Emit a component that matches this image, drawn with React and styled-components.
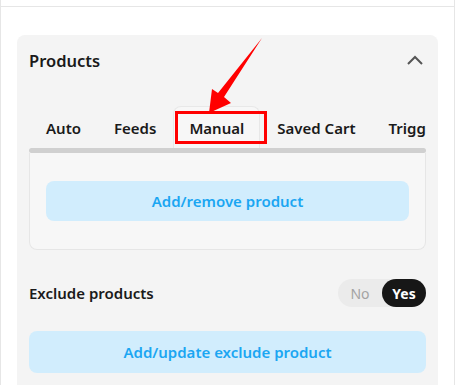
import React from 'react';
import styled, { createGlobalStyle } from 'styled-components';

const GlobalStyle = createGlobalStyle`
  html, body {
    margin: 0;
    padding: 0;
    background: #ffffff;
    font-family: "Noto Sans", "Open Sans", Arial, sans-serif;
    color: #1a1a1a;
    overflow: hidden;
  }
  * { box-sizing: border-box; }
`;

const Sidebar = styled.div`
  position: relative;
  width: 455px;
  height: 385px;
  border-left: 1px solid #e6e6e6;
  border-right: 1px solid #e6e6e6;
  background: #ffffff;
`;

const TopStrip = styled.div`
  height: 7px;
  border-bottom: 1px solid #e6e6e6;
`;

const Content = styled.div`
  padding: 28px 16px 0 16px;
`;

const Panel = styled.section`
  background: #f4f4f4;
  border-radius: 8px;
  padding: 0 12px 20px 12px;
  height: 360px;
`;

const PanelHeader = styled.div`
  display: flex;
  align-items: center;
  justify-content: space-between;
  height: 50px;
`;

const PanelTitle = styled.h2`
  margin: 0;
  font-size: 16.5px;
  font-weight: 600;
  color: #1a1a1a;
`;

const Chevron = styled.svg`
  width: 18px;
  height: 18px;
  margin-right: 2px;
`;

const Tabs = styled.div`
  margin-top: 21px;
  width: 397px;
  overflow: hidden;
`;

const TabRow = styled.div`
  display: flex;
  gap: 1px;
  padding-left: 1px;
  height: 42px;
  white-space: nowrap;
`;

const Tab = styled.div`
  display: flex;
  align-items: center;
  padding: 0 15px;
  font-size: 15px;
  font-weight: 600;
  color: #1a1a1a;
  border: 1px solid ${p => (p.$active ? '#e8e8e8' : 'transparent')};
  border-bottom: none;
  border-radius: 8px 8px 0 0;
  background: ${p => (p.$active ? '#f7f7f7' : 'transparent')};
`;

const ScrollBar = styled.div`
  height: 5px;
  background: #d0d0d0;
  border-radius: 3px;
`;

const TabBody = styled.div`
  background: #f7f7f7;
  border: 1px solid #e6e6e6;
  border-top: none;
  border-radius: 0 0 8px 8px;
  padding: 28px 16px;
`;

const ActionButton = styled.button`
  display: block;
  width: 100%;
  height: ${p => p.$h || 40}px;
  border: none;
  border-radius: 8px;
  background: #d1edfd;
  color: #1ba6f2;
  font-family: inherit;
  font-size: 15px;
  font-weight: 600;
  cursor: pointer;
`;

const OptionRow = styled.div`
  display: flex;
  align-items: center;
  justify-content: space-between;
  margin-top: 29px;
  margin-bottom: 24px;
`;

const OptionLabel = styled.span`
  font-size: 15px;
  font-weight: 600;
  color: #1a1a1a;
`;

const Toggle = styled.div`
  display: flex;
  width: 88px;
  height: 28px;
  border-radius: 14px;
  background: #ebebeb;
`;

const ToggleOption = styled.span`
  display: flex;
  align-items: center;
  justify-content: center;
  flex: 1;
  border-radius: 14px;
  font-size: 14px;
  font-weight: ${p => (p.$on ? 700 : 400)};
  color: ${p => (p.$on ? '#ffffff' : '#a3a3a3')};
  background: ${p => (p.$on ? '#171717' : 'transparent')};
`;

const Highlight = styled.div`
  position: absolute;
  left: 175px;
  top: 111px;
  width: 92px;
  height: 33px;
  border: 3px solid #ff0000;
`;

const Arrow = styled.svg`
  position: absolute;
  left: 0;
  top: 0;
  width: 463px;
  height: 385px;
  pointer-events: none;
`;

const tabs = ['Auto', 'Feeds', 'Manual', 'Saved Cart', 'Triggers'];

export default function App() {
  return (
    <>
      <GlobalStyle />
      <Sidebar>
        <TopStrip />
        <Content>
          <Panel>
            <PanelHeader>
              <PanelTitle>Products</PanelTitle>
              <Chevron viewBox="0 0 18 18">
                <path d="M2 13 L9 6 L16 13" fill="none" stroke="#555" strokeWidth="2" />
              </Chevron>
            </PanelHeader>
            <Tabs>
              <TabRow>
                {tabs.map(t => (
                  <Tab key={t} $active={t === 'Manual'}>{t}</Tab>
                ))}
              </TabRow>
              <ScrollBar />
              <TabBody>
                <ActionButton>Add/remove product</ActionButton>
              </TabBody>
            </Tabs>
            <OptionRow>
              <OptionLabel>Exclude products</OptionLabel>
              <Toggle>
                <ToggleOption>No</ToggleOption>
                <ToggleOption $on>Yes</ToggleOption>
              </Toggle>
            </OptionRow>
            <ActionButton $h={42}>Add/update exclude product</ActionButton>
          </Panel>
        </Content>
      </Sidebar>
      <Highlight />
      <Arrow viewBox="0 0 463 385">
        <polygon points="262,38 224,97 231,103 209,113 212,89 218,93" fill="#ff0000" />
      </Arrow>
    </>
  );
}
